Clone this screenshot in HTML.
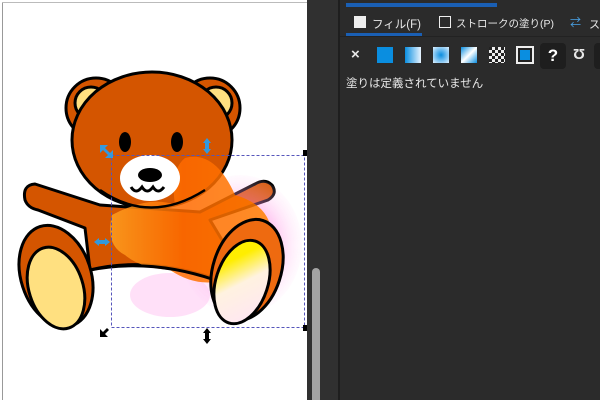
<!DOCTYPE html>
<html><head><meta charset="utf-8"><style>
body{margin:0;width:600px;height:400px;overflow:hidden;background:#2b2b2b;position:relative;font-family:"Liberation Sans","Noto Sans CJK JP",sans-serif}
.canvas{position:absolute;left:0;top:0;width:307px;height:400px;background:#fff}
.t{position:absolute;color:#e8e8e8;font-size:11px;white-space:nowrap}
</style></head><body>
<div class="canvas"></div>
<div style="position:absolute;left:2px;top:2px;width:1px;height:398px;background:#999"></div>
<div style="position:absolute;left:2px;top:2px;width:305px;height:1px;background:#bbb"></div>
<div style="position:absolute;left:307px;top:0;width:31px;height:400px;background:#303030"></div>
<div style="position:absolute;left:312px;top:268px;width:8px;height:132px;background:#a3a3a3;border-radius:4px 4px 0 0"></div>
<div style="position:absolute;left:338px;top:0;width:2px;height:400px;background:#1e1e1e"></div>
<div style="position:absolute;left:346px;top:3px;width:151px;height:4px;background:#1a5fb4"></div>
<div style="position:absolute;left:340px;top:36px;width:260px;height:1px;background:#222"></div>
<div style="position:absolute;left:346px;top:33px;width:76px;height:3px;background:#1a5fb4"></div>
<div style="position:absolute;left:354px;top:16px;width:12px;height:12px;background:#eee"></div>
<div class="t" style="left:372px;top:16px;font-size:11.5px">フィル(F)</div>
<div style="position:absolute;left:439px;top:16px;width:10px;height:10px;border:1px solid #eee"></div>
<div class="t" style="left:456px;top:16px;font-size:10.5px">ストロークの塗り(P)</div>
<div class="t" style="left:570px;top:14px;color:#4aa3e8">⇄</div>
<div class="t" style="left:589px;top:16px">ス</div>
<div class="t" style="left:351px;top:46px;font-size:15px;font-weight:bold">×</div>
<div style="position:absolute;left:377px;top:47px;width:16px;height:16px;background:#0a8ee0"></div>
<div style="position:absolute;left:405px;top:47px;width:16px;height:16px;background:linear-gradient(90deg,#0a8ee0,#e8f4ff)"></div>
<div style="position:absolute;left:433px;top:47px;width:16px;height:16px;background:radial-gradient(#0a8ee0,#dff0ff)"></div>
<div style="position:absolute;left:461px;top:47px;width:16px;height:16px;background:linear-gradient(135deg,#0a8ee0,#fff 50%,#0a8ee0)"></div>
<div style="position:absolute;left:489px;top:47px;width:16px;height:16px;background:repeating-conic-gradient(#eee 0 25%,#222 0 50%) 0 0/6px 6px"></div>
<div style="position:absolute;left:516px;top:46px;width:14px;height:14px;border:2px solid #eee;background:#0a8ee0;box-shadow:inset 0 0 0 2px #222"></div>
<div style="position:absolute;left:540px;top:43px;width:26px;height:26px;background:#1e1e1e;border-radius:4px;color:#fff;font-weight:bold;font-size:17px;text-align:center;line-height:26px">?</div>
<div class="t" style="left:573px;top:46px;font-size:15px;font-weight:bold">Ʊ</div>
<div style="position:absolute;left:594px;top:43px;width:10px;height:26px;background:#1e1e1e;border-radius:4px"></div>
<div class="t" style="left:346px;top:75px;font-size:11.5px">塗りは定義されていません</div>
<svg style="position:absolute;left:0;top:0" width="307" height="400">
<defs>
<radialGradient id="pk"><stop offset="0.55" stop-color="#ff80e0"/><stop offset="1" stop-color="#ffd0f4" stop-opacity="0.2"/></radialGradient>
<linearGradient id="or" x1="0" y1="0" x2="1" y2="0"><stop offset="0" stop-color="#ffa020"/><stop offset="0.45" stop-color="#ff6a00"/><stop offset="1" stop-color="#ff7a00"/></linearGradient>
<linearGradient id="ft" x1="0" y1="0" x2="0.6" y2="1"><stop offset="0.3" stop-color="#ffee00"/><stop offset="0.6" stop-color="#fff2e0"/><stop offset="1" stop-color="#ffe8f0"/></linearGradient>
</defs>
<g stroke="#000" stroke-width="3" stroke-linejoin="round">
<circle cx="96" cy="108" r="30" fill="#d45500"/><circle cx="91" cy="103" r="16" fill="#ffe080"/>
<circle cx="210" cy="108" r="30" fill="#d45500"/><circle cx="216" cy="103" r="16" fill="#ffe080"/>
<path d="M100 205 L35 184 Q22 185 25 200 Q28 208 38 210 L85 228 L90 270 Q150 255 225 282 L228 250 L210 220 L268 200 Q278 194 272 185 Q265 178 255 184 L200 212 Z" fill="#d45500"/>
<ellipse cx="152" cy="140" rx="80" ry="68" fill="#d45500"/>
<ellipse cx="56" cy="276" rx="35" ry="52" transform="rotate(-18 56 276)" fill="#d45500"/>
<ellipse cx="56" cy="288" rx="27" ry="42" transform="rotate(-18 56 288)" fill="#ffe080"/>
</g>
<g opacity="0.85">
<ellipse cx="240" cy="245" rx="62" ry="70" fill="url(#pk)" opacity="0.55"/>
<ellipse cx="170" cy="295" rx="40" ry="22" fill="#ffb0ee" opacity="0.45"/>
<path d="M112 215 Q150 195 175 205 Q170 170 185 158 Q215 150 235 195 Q270 205 272 235 Q265 275 230 278 Q200 290 170 270 Q140 268 125 255 Q105 245 112 215Z" fill="url(#or)"/>
</g>
<path d="M90 270 Q150 258 215 280" stroke="#000" stroke-width="3" fill="none"/>
<path d="M100 190 Q150 225 205 190" stroke="#000" stroke-width="2.5" fill="none"/>
<g stroke="#000" stroke-width="3">
<ellipse cx="247" cy="270" rx="34" ry="52" transform="rotate(18 247 270)" fill="#ee6a10"/>
<ellipse cx="242" cy="282" rx="26" ry="43" transform="rotate(18 242 282)" fill="url(#ft)"/>
</g>
<ellipse cx="125" cy="142" rx="6" ry="10"/><ellipse cx="177" cy="142" rx="6" ry="10"/>
<ellipse cx="150" cy="178" rx="30" ry="23" fill="#fff"/>
<ellipse cx="150" cy="175" rx="12" ry="7"/>
<path d="M131 187 q5 8 11 0 q5 8 11 0 q5 8 11 0" stroke="#000" stroke-width="3" fill="none"/>
<rect x="111.5" y="155.5" width="193" height="172" fill="none" stroke="#55b" stroke-dasharray="3 2"/>
<g fill="#3399dd"><path d="M100 145 l8 0 -3 3 5 5 3-3 0 8 -8 0 3-3 -5-5 -3 3z"/><path d="M207 138 l4 5 -2 0 0 6 2 0 -4 5 -4-5 2 0 0-6 -2 0z"/><path d="M94 242 l5-4 0 2 6 0 0-2 5 4 -5 4 0-2 -6 0 0 2z"/></g>
<g fill="#000"><path d="M100 337 l0-8 3 3 4-4 2 2 -4 4 3 3z"/><path d="M207 328 l4 5 -2 0 0 6 2 0 -4 5 -4-5 2 0 0-6 -2 0z"/><rect x="303" y="150" width="4" height="6"/><rect x="303" y="325" width="4" height="6"/></g>
</svg>
</body></html>
